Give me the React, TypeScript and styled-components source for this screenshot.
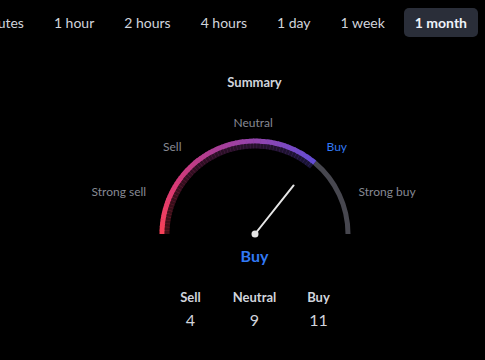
import { createGlobalStyle, styled } from "styled-components";

const GlobalStyle = createGlobalStyle`
  html, body {
    margin: 0;
    background: #000;
    font-family: Lato, "Open Sans", sans-serif;
    color: #d1d4dc;
  }
  * { box-sizing: border-box; }
`;

const Page = styled.div`
  width: 485px;
  height: 360px;
  overflow: hidden;
`;

const Tabs = styled.div`
  display: flex;
  justify-content: flex-end;
  gap: 8px;
  padding: 8px 7px 0 0;
  white-space: nowrap;
`;

const Tab = styled.div<{ $active?: boolean }>`
  flex-shrink: 0;
  height: 29px;
  line-height: 29px;
  padding: 0 11px;
  border-radius: 5px;
  font-size: 14px;
  font-weight: ${(p) => (p.$active ? 700 : 400)};
  color: ${(p) => (p.$active ? "#f0f3fa" : "#d1d4dc")};
  background: ${(p) => (p.$active ? "#2a2e39" : "transparent")};
`;

const Content = styled.div`
  display: flex;
  flex-direction: column;
  align-items: center;
  padding-left: 24px;
`;

const Title = styled.div`
  margin-top: 37px;
  font-size: 13px;
  font-weight: 700;
  color: #d1d4dc;
`;

const GaugeWrap = styled.div`
  position: relative;
  width: 340px;
  height: 137px;
  margin-top: 19px;
`;

const Label = styled.span<{ $blue?: boolean }>`
  position: absolute;
  font-size: 12px;
  line-height: 14px;
  color: ${(p) => (p.$blue ? "#3179f5" : "#868993")};
  white-space: nowrap;
`;

const Result = styled.div`
  font-size: 16px;
  font-weight: 700;
  color: #3179f5;
`;

const Counts = styled.div`
  display: grid;
  grid-template-columns: 54px 74px 54px;
  margin-top: 24px;
  text-align: center;
`;

const CountHead = styled.div`
  font-size: 13px;
  font-weight: 700;
  color: #d1d4dc;
`;

const CountValue = styled.div`
  margin-top: 5px;
  font-size: 16px;
  color: #d1d4dc;
`;

const CX = 170;
const CY = 125;
const R = 93;

const stops: [number, number, number][] = [
  [247, 65, 88],
  [214, 58, 120],
  [170, 62, 150],
  [140, 70, 180],
  [100, 78, 214],
];

const colorAt = (t: number) => {
  const s = t * (stops.length - 1);
  const i = Math.min(Math.floor(s), stops.length - 2);
  const f = s - i;
  const c = stops[i].map((v, k) => Math.round(v + (stops[i + 1][k] - v) * f));
  return `rgb(${c[0]},${c[1]},${c[2]})`;
};

const pt = (deg: number, r: number) => {
  const a = (deg * Math.PI) / 180;
  return [CX + r * Math.cos(a), CY - r * Math.sin(a)];
};

const arc = (from: number, to: number, r: number) => {
  const [x1, y1] = pt(from, r);
  const [x2, y2] = pt(to, r);
  return `M ${x1} ${y1} A ${r} ${r} 0 0 1 ${x2} ${y2}`;
};

const Gauge = () => {
  const end = 50;
  const segs = [];
  const n = 60;
  for (let i = 0; i < n; i++) {
    const a1 = 180 - ((180 - end) * i) / n;
    const a2 = 180 - ((180 - end) * (i + 1)) / n - 0.4;
    segs.push({ d: arc(a1, Math.max(a2, end), R), inner: arc(a1, Math.max(a2, end), R - 5), c: colorAt(i / (n - 1)) });
  }
  const [nx, ny] = pt(51.5, 62);
  return (
    <svg width="340" height="137" style={{ position: "absolute", left: 0, top: 0 }}>
      <path d={arc(end, 0, R)} stroke="#47474f" strokeWidth="5" fill="none" />
      {segs.map((s, i) => (
        <g key={i}>
          <path d={s.d} stroke={s.c} strokeWidth="5" fill="none" />
          <path d={s.inner} stroke={s.c} strokeOpacity="0.25" strokeWidth="5" fill="none" />
        </g>
      ))}
      <line x1={CX} y1={CY} x2={nx} y2={ny} stroke="#e6e6e6" strokeWidth="2" strokeLinecap="round" />
      <circle cx={CX} cy={CY} r="3.5" fill="#e6e6e6" />
    </svg>
  );
};

export default function App() {
  const tabs = ["30 minutes", "1 hour", "2 hours", "4 hours", "1 day", "1 week", "1 month"];
  return (
    <Page>
      <GlobalStyle />
      <Tabs>
        {tabs.map((t) => (
          <Tab key={t} $active={t === "1 month"}>
            {t}
          </Tab>
        ))}
      </Tabs>
      <Content>
        <Title>Summary</Title>
        <GaugeWrap>
          <Gauge />
          <Label style={{ left: 7, top: 76 }}>Strong sell</Label>
          <Label style={{ right: 243, top: 31 }}>Sell</Label>
          <Label style={{ left: 149, top: 7 }}>Neutral</Label>
          <Label $blue style={{ left: 242, top: 31 }}>Buy</Label>
          <Label style={{ left: 274, top: 76 }}>Strong buy</Label>
        </GaugeWrap>
        <Result>Buy</Result>
        <Counts>
          <div>
            <CountHead>Sell</CountHead>
            <CountValue>4</CountValue>
          </div>
          <div>
            <CountHead>Neutral</CountHead>
            <CountValue>9</CountValue>
          </div>
          <div>
            <CountHead>Buy</CountHead>
            <CountValue>11</CountValue>
          </div>
        </Counts>
      </Content>
    </Page>
  );
}
